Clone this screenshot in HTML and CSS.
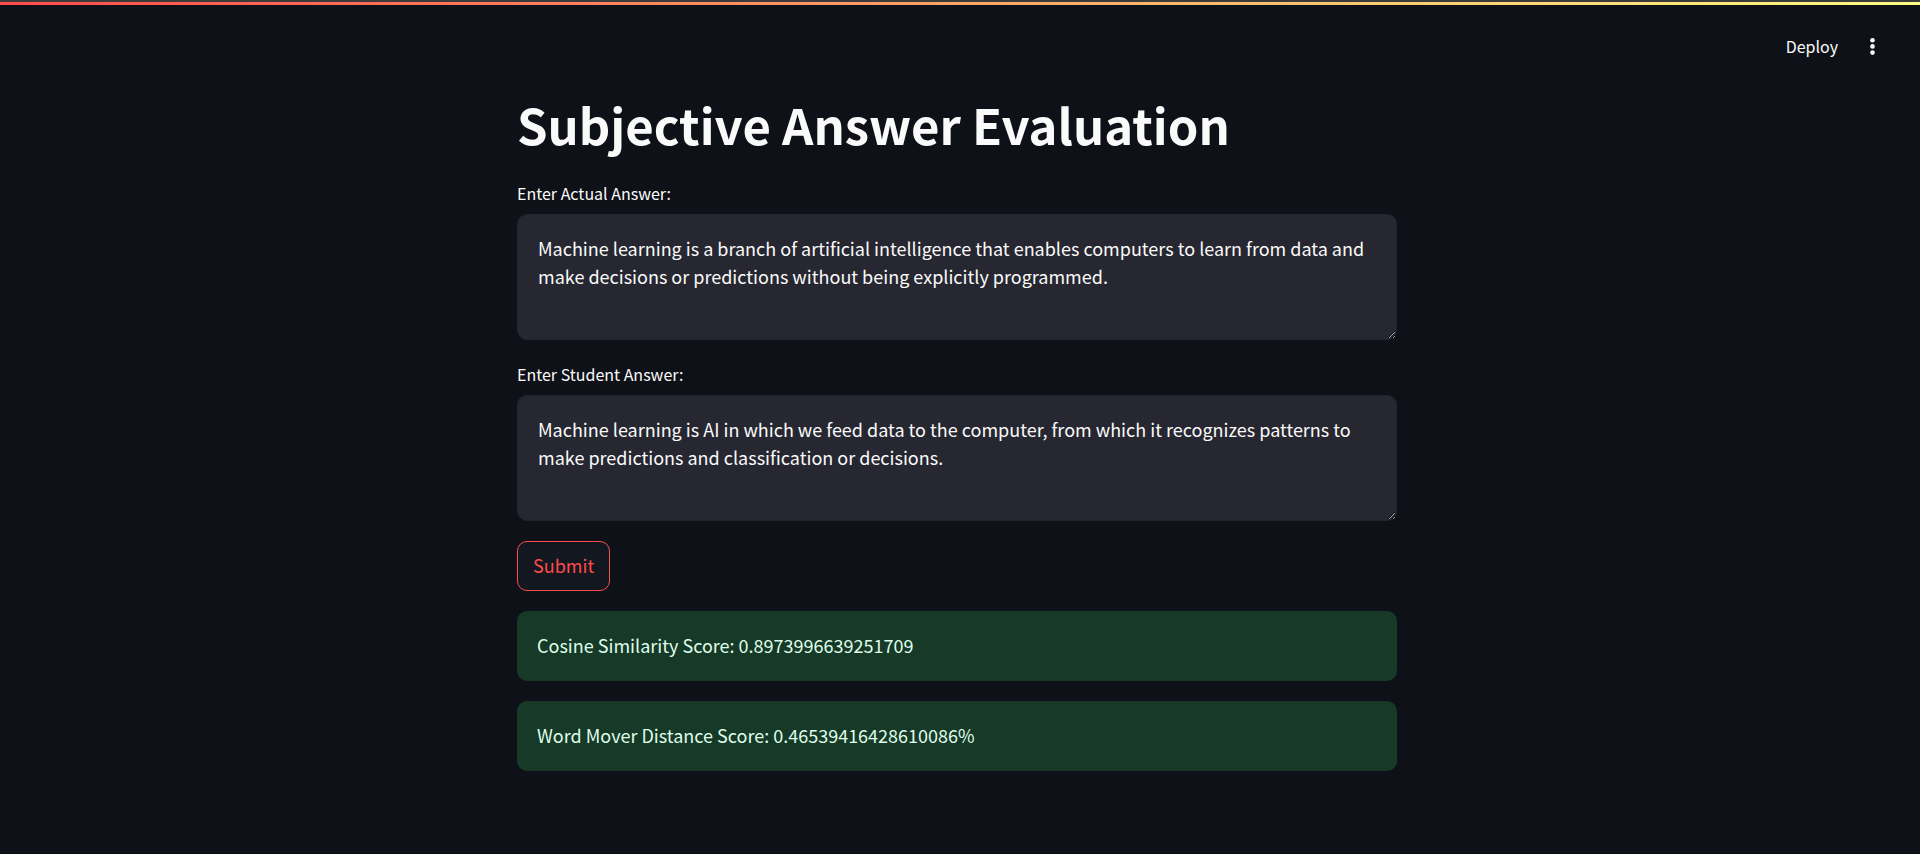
FILE: index.html
```html
<!DOCTYPE html>
<html lang="en">
<head>
<meta charset="utf-8">
<meta name="viewport" content="width=device-width, initial-scale=1">
<title>Subjective Answer Evaluation</title>
<link rel="stylesheet" href="styles.css">
</head>
<body>
<div class="decoration"></div>
<header class="toolbar">
  <button class="toolbar-button" type="button">Deploy</button>
  <button class="toolbar-button menu-button" type="button" aria-label="Main menu">
    <svg width="20" height="20" viewBox="0 0 20 20" fill="currentColor" aria-hidden="true">
      <circle cx="10.5" cy="4.2" r="2.3"/>
      <circle cx="10.5" cy="10.4" r="2.3"/>
      <circle cx="10.5" cy="16.6" r="2.3"/>
    </svg>
  </button>
</header>
<main class="content">
  <h1 class="title">Subjective Answer Evaluation</h1>
  <form class="form">
    <div class="field">
      <label class="label" for="actual">Enter Actual Answer:</label>
      <textarea class="textarea" id="actual" spellcheck="false">Machine learning is a branch of artificial intelligence that enables computers to learn from data and make decisions or predictions without being explicitly programmed.</textarea>
    </div>
    <div class="field">
      <label class="label" for="student">Enter Student Answer:</label>
      <textarea class="textarea" id="student" spellcheck="false">Machine learning is AI in which we feed data to the computer, from which it recognizes patterns to make predictions and classification or decisions.</textarea>
    </div>
    <button class="submit" type="button">Submit</button>
  </form>
  <div class="alert" role="alert">Cosine Similarity Score: 0.8973996639251709</div>
  <div class="alert" role="alert">Word Mover Distance Score: 0.46539416428610086%</div>
</main>
</body>
</html>
```
FILE: styles.css
```css
* {
  box-sizing: border-box;
}

body {
  margin: 0;
  min-height: 100vh;
  background: #0e1117;
  border-top: 2px solid #3b3b3b;
  border-bottom: 1px solid #08090c;
  color: #fafafa;
  font-family: "Noto Sans CJK SC", "Noto Sans", sans-serif;
  font-size: 18px;
  line-height: 28px;
}

button,
textarea {
  font: inherit;
  color: inherit;
}

.decoration {
  height: 3px;
  background: linear-gradient(90deg, #ff4b4b, #fffd80);
}

.toolbar {
  display: flex;
  justify-content: flex-end;
  align-items: center;
  gap: 24px;
  padding: 27px 38px 0 0;
}

.toolbar-button {
  display: flex;
  align-items: center;
  padding: 0;
  border: 0;
  background: none;
  font-size: 16px;
  line-height: 28px;
}

.content {
  max-width: 926px;
  margin: 0 auto;
  padding: 31px 26px 72px 20px;
  display: flex;
  flex-direction: column;
  gap: 20px;
}

.title {
  margin: 0 0 2px;
  font-size: 49px;
  font-weight: 700;
  line-height: 66px;
}

.form {
  display: flex;
  flex-direction: column;
  align-items: stretch;
  gap: 20px;
}

.field {
  display: flex;
  flex-direction: column;
  gap: 7px;
}

.label {
  font-size: 16px;
}

.textarea {
  display: block;
  width: 100%;
  height: 126px;
  padding: 19px 20px;
  border: 1px solid #23252d;
  border-radius: 10px;
  background: #262730;
  outline: none;
  resize: vertical;
}

.submit {
  align-self: flex-start;
  padding: 9px 15px 11px;
  border: 1px solid #ff4b4b;
  border-radius: 10px;
  background: #131720;
  color: #ff4b4b;
}

.alert {
  padding: 20px 20px 22px;
  border-radius: 10px;
  background: #173928;
  color: #dffde9;
}
```
